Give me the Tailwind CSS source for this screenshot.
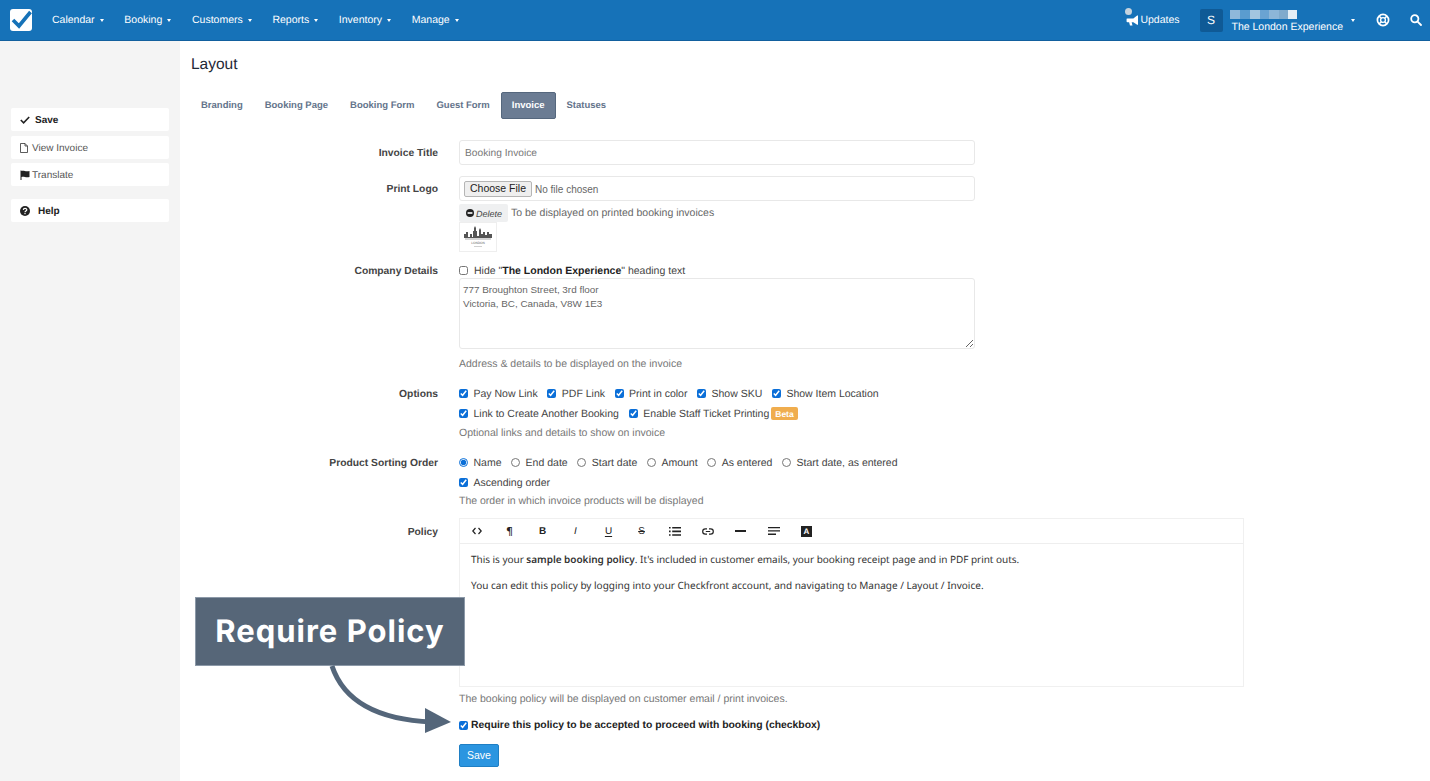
<!doctype html>
<html lang="en">
<head>
    <meta charset="UTF-8">
    <meta name="viewport" content="width=device-width, initial-scale=1.0">
    <title>Layout</title>
    <script src="https://cdn.jsdelivr.net/npm/@tailwindcss/browser@4"></script>
</head>
<body class="bg-white text-[#333] font-['Liberation_Sans',Arial,sans-serif] text-[10.5px] leading-[13px] [text-rendering:geometricPrecision] h-[781px] overflow-hidden relative">

    <!-- top nav -->
    <header class="h-[41px] bg-[#1672b8] border-b border-[#12609e] flex items-center text-white">
        <svg class="ml-[10px] w-[22px] h-[22px]" viewBox="0 0 22 22">
            <rect width="22" height="22" rx="3" fill="#fff"/>
            <path d="M3 11 L9 17 L20.5 3" fill="none" stroke="#1672b8" stroke-width="3.6"/>
        </svg>
        <nav class="ml-[20px] flex gap-[20.7px] [&>a]:flex [&>a]:items-center [&>a]:gap-[5px]">
            <a>Calendar <span class="border-x-[2.5px] border-x-transparent border-t-[3px] border-t-white"></span></a>
            <a>Booking <span class="border-x-[2.5px] border-x-transparent border-t-[3px] border-t-white"></span></a>
            <a>Customers <span class="border-x-[2.5px] border-x-transparent border-t-[3px] border-t-white"></span></a>
            <a>Reports <span class="border-x-[2.5px] border-x-transparent border-t-[3px] border-t-white"></span></a>
            <a>Inventory <span class="border-x-[2.5px] border-x-transparent border-t-[3px] border-t-white"></span></a>
            <a>Manage <span class="border-x-[2.5px] border-x-transparent border-t-[3px] border-t-white"></span></a>
        </nav>
        <div class="ml-auto flex items-center">
            <div class="relative flex items-center gap-[1px]">
                <span class="absolute left-[-1px] top-[-6px] w-[7px] h-[7px] rounded-full bg-[#c5d3de]"></span>
                <svg class="w-[13px] h-[11px]" viewBox="0 0 14 13" fill="#fff"><path d="M0 4.5 L1 4 L8 4 L12.5 0.5 L13.5 0.5 L13.5 11.5 L12.5 11.5 L8 8.5 L6 8.5 L7 12.5 L4 12.5 L3 8.5 L1 8.5 L0 8 Z"/></svg>
                <span>Updates</span>
            </div>
            <div class="ml-[20px] w-[23px] h-[23px] rounded-[2px] bg-[#0f5a96] flex items-center justify-center text-[12px]">S</div>
            <div class="ml-[9px] pt-[4px] flex flex-col">
                <div class="flex h-[9px] w-[67px] ml-[-2px]">
                    <i class="w-[10px] bg-[#8fb8da]"></i><i class="w-[10px] bg-[#5a9ccf]"></i><i class="w-[10px] bg-[#a3c5e0]"></i><i class="w-[9px] bg-[#6aa3d2]"></i><i class="w-[10px] bg-[#8db6d8]"></i><i class="w-[9px] bg-[#80aacc]"></i><i class="w-[9px] bg-[#e3edf5]"></i>
                </div>
                <div class="mt-[2px]">The London Experience</div>
            </div>
            <span class="ml-[8px] border-x-[2.5px] border-x-transparent border-t-[3px] border-t-white"></span>
            <svg class="ml-[21px] w-[14px] h-[14px]" viewBox="0 0 14 14" fill="none" stroke="#fff">
                <circle cx="7" cy="7" r="5.6" stroke-width="1.7"/><circle cx="7" cy="7" r="2.4" stroke-width="1.3"/>
                <path d="M3 3 L5.3 5.3 M11 3 L8.7 5.3 M3 11 L5.3 8.7 M11 11 L8.7 8.7" stroke-width="1.6"/>
            </svg>
            <svg class="ml-[20px] mr-[8px] w-[12px] h-[12px]" viewBox="0 0 12 12" fill="none" stroke="#fff" stroke-width="1.8">
                <circle cx="4.8" cy="4.8" r="3.6"/><path d="M7.6 7.6 L11 11" stroke-linecap="round"/>
            </svg>
        </div>
    </header>

    <div class="flex h-[740px]">
        <!-- left sidebar -->
        <aside class="w-[180px] shrink-0 bg-[#f4f4f4] px-[11px] pt-[67px]">
            <div class="h-[23px] bg-white rounded-[2px] flex items-center pl-[9px] gap-[5px] font-bold text-[#222] text-[10px]">
                <svg class="w-[10px] h-[8px]" viewBox="0 0 10 8" fill="none" stroke="#222" stroke-width="1.6"><path d="M0.8 4 L3.6 6.8 L9.2 1"/></svg>
                <span class="pt-[2px]">Save</span>
            </div>
            <div class="mt-[5px] h-[23px] bg-white rounded-[2px] flex items-center pl-[9px] gap-[4px] text-[#555] text-[10px]">
                <svg class="w-[8px] h-[10px]" viewBox="0 0 8 10" fill="none" stroke="#333" stroke-width="0.8"><path d="M0.5 0.5 H5 L7.5 3 V9.5 H0.5 Z M5 0.5 V3 H7.5"/></svg>
                <span class="pt-[1px]">View Invoice</span>
            </div>
            <div class="mt-[4px] h-[23px] bg-white rounded-[2px] flex items-center pl-[9px] gap-[2px] text-[#555] text-[10px]">
                <svg class="w-[10px] h-[10px]" viewBox="0 0 10 10" fill="#222"><path d="M0.5 0.5 H1.5 V10 H0.5 Z M1.5 1 C4 0 5.5 2.2 9.5 1 V7 C5.5 8 4 6 1.5 7 Z"/></svg>
                <span class="pt-[1px]">Translate</span>
            </div>
            <div class="mt-[13px] h-[23px] bg-white rounded-[2px] flex items-center pl-[9px] gap-[8px] font-bold text-[#222] text-[10px]">
                <svg class="w-[10px] h-[10px]" viewBox="0 0 10 10"><circle cx="5" cy="5" r="5" fill="#222"/><path d="M3.3 3.9 C3.4 1.9 6.8 1.9 6.8 3.8 C6.8 5 5 5 5 6.2" fill="none" stroke="#fff" stroke-width="1.2"/><rect x="4.4" y="7" width="1.2" height="1.2" fill="#fff"/></svg>
                <span class="pt-[2px]">Help</span>
            </div>
        </aside>

        <!-- main -->
        <main class="flex-1 pl-[11px]">
            <h1 class="mt-[15px] text-[15.5px] leading-[18px] text-[#1f2937]">Layout</h1>

            <div class="mt-[18px] ml-[-1px] flex items-center text-[9.5px] font-bold text-[#64748b] h-[27px] [&>a]:px-[11px] [&>a]:pb-[1px] [&>a]:h-[27px] [&>a]:flex [&>a]:items-center [&>a]:rounded-[2px]">
                <a>Branding</a>
                <a>Booking Page</a>
                <a>Booking Form</a>
                <a>Guest Form</a>
                <a class="bg-[#6b7c93] text-white border border-[#55677d] !px-[10px]">Invoice</a>
                <a>Statuses</a>
            </div>

            <!-- invoice title -->
            <div class="mt-[21px] flex h-[25px]">
                <label class="w-[247px] text-right font-bold text-[#444] text-[10.3px] leading-[27px]">Invoice Title</label>
                <div class="ml-[21px] w-[516px] h-[25px] border border-[#e8e8e8] rounded-[3px] px-[5px] text-[#777] text-[10.2px] leading-[25px]">Booking Invoice</div>
            </div>

            <!-- print logo -->
            <div class="mt-[11px] flex">
                <label class="w-[247px] text-right font-bold text-[#444] text-[10.3px] leading-[27px]">Print Logo</label>
                <div class="ml-[21px] w-[516px]">
                    <div class="h-[25px] border border-[#e8e8e8] rounded-[3px] flex items-center px-[4px]">
                        <input type="file" class="text-[10px] text-[#666] file:h-[16px] file:px-[5px] file:mr-[3px] file:bg-[#efefef] file:border file:border-[#b5b5b5] file:rounded-[2px] file:text-[#222] file:text-[10.5px]">
                    </div>
                    <div class="mt-[3px] flex h-[18px]">
                        <span class="w-[49px] h-[18px] bg-[#eff0f1] rounded-[2px] flex items-center pl-[7px] gap-[2px] text-[9px] italic text-[#444]">
                            <svg class="w-[8px] h-[8px] shrink-0" viewBox="0 0 8 8"><circle cx="4" cy="4" r="4" fill="#222"/><rect x="1.6" y="3.2" width="4.8" height="1.6" fill="#fff"/></svg>
                            <span class="pt-[2px]">Delete</span>
                        </span>
                        <span class="ml-[3px] text-[#666] leading-[19px]">To be displayed on printed booking invoices</span>
                    </div>
                    <div class="w-[38px] h-[30px] border border-[#eee] flex items-center justify-center">
                        <svg class="w-[30px] h-[24px]" viewBox="0 0 30 24">
                            <path d="M1 12 V9 H3 V7 H5 V12 H7 V9 H9 V12 H10 V6 H11 V3 L12 1 L13 3 V6 H14 V11 H16 V5 L17 3 L18 5 V9 H20 V7 H22 V10 H24 V7 H26 V9 H29 V13 H1 Z" fill="#555"/>
                            <path d="M2 14 H28" stroke="#888" stroke-width="0.7"/>
                            <text x="15" y="19" font-size="3.2" text-anchor="middle" fill="#666">LONDON</text>
                            <path d="M11 21.5 H19" stroke="#bbb" stroke-width="0.7"/>
                        </svg>
                    </div>
                </div>
            </div>

            <!-- company details -->
            <div class="mt-[11px] flex">
                <label class="w-[247px] text-right font-bold text-[#444] text-[10.3px] leading-[17px]">Company Details</label>
                <div class="ml-[21px] w-[516px]">
                    <label class="flex items-start h-[15px] text-[#444]">
                        <input type="checkbox" class="w-[9px] h-[9px] mr-[6px] mt-[3px]">
                        <span class="leading-[17px]">Hide "<b class="text-[#222]">The London Experience</b>" heading text</span>
                    </label>
                    <textarea class="block w-[516px] h-[71px] border border-[#e8e8e8] rounded-[3px] px-[3px] py-[4px] text-[9.9px] leading-[14px] text-[#666]">777 Broughton Street, 3rd floor
Victoria, BC, Canada, V8W 1E3</textarea>
                    <p class="mt-[8px] text-[#777] leading-[14px]">Address &amp; details to be displayed on the invoice</p>
                </div>
            </div>

            <!-- options -->
            <div class="mt-[12px] flex">
                <label class="w-[247px] text-right font-bold text-[#444] text-[10.3px] leading-[24px]">Options</label>
                <div class="ml-[21px] w-[516px] text-[#444] [&_input]:w-[9px] [&_input]:h-[9px] [&_input]:mt-[5.5px] [&_input]:mr-[5.5px] [&_input]:accent-[#0b6fd8] [&_label]:flex [&_label]:items-start [&_label]:leading-[22px]">
                    <div class="flex h-[20px] gap-[9.6px]">
                        <label><input type="checkbox" checked>Pay Now Link</label>
                        <label><input type="checkbox" checked>PDF Link</label>
                        <label><input type="checkbox" checked>Print in color</label>
                        <label><input type="checkbox" checked>Show SKU</label>
                        <label><input type="checkbox" checked>Show Item Location</label>
                    </div>
                    <div class="flex h-[20px] gap-[10px]">
                        <label><input type="checkbox" checked>Link to Create Another Booking</label>
                        <label><input type="checkbox" checked>Enable Staff Ticket Printing<span class="ml-[2px] mt-[4px] px-[4px] h-[13px] rounded-[2px] bg-[#f0ad4e] text-white text-[8.5px] font-bold flex items-center">Beta</span></label>
                    </div>
                    <p class="text-[#777] leading-[20px]">Optional links and details to show on invoice</p>
                </div>
            </div>

            <!-- sorting -->
            <div class="mt-[9px] flex">
                <label class="w-[247px] text-right font-bold text-[#444] text-[10.3px] leading-[24px]">Product Sorting Order</label>
                <div class="ml-[21px] w-[516px] text-[#444] [&_input]:w-[9px] [&_input]:h-[9px] [&_input]:mt-[5.5px] [&_input]:mr-[5.5px] [&_input]:accent-[#0b6fd8] [&_label]:flex [&_label]:items-start [&_label]:leading-[22px]">
                    <div class="flex h-[20px] gap-[9.6px]">
                        <label><input type="radio" name="sort" checked>Name</label>
                        <label><input type="radio" name="sort">End date</label>
                        <label><input type="radio" name="sort">Start date</label>
                        <label><input type="radio" name="sort">Amount</label>
                        <label><input type="radio" name="sort">As entered</label>
                        <label><input type="radio" name="sort">Start date, as entered</label>
                    </div>
                    <div class="flex h-[20px]">
                        <label><input type="checkbox" checked>Ascending order</label>
                    </div>
                    <p class="text-[#777] leading-[18px]">The order in which invoice products will be displayed</p>
                </div>
            </div>

            <!-- policy -->
            <div class="mt-[8px] flex">
                <label class="w-[247px] text-right font-bold text-[#444] text-[10.3px] leading-[30px]">Policy</label>
                <div class="ml-[21px] w-[785px]">
                    <div class="border border-[#f0f0f0] h-[169px]">
                        <div class="h-[25px] border-b border-[#eee] flex items-center text-[#222] text-[10px] [&>span]:w-[33px] [&>span]:h-[25px] [&>span]:flex [&>span]:items-center [&>span]:justify-center">
                            <span><svg class="w-[10px] h-[8px]" viewBox="0 0 10 8" fill="none" stroke="#222" stroke-width="1.2"><path d="M3.5 1 L0.8 4 L3.5 7 M6.5 1 L9.2 4 L6.5 7"/></svg></span>
                            <span class="font-['DejaVu_Sans',sans-serif] text-[11px]">¶</span>
                            <span class="font-bold">B</span>
                            <span class="italic">I</span>
                            <span class="underline underline-offset-2">U</span>
                            <span class="line-through">S</span>
                            <span><svg class="w-[12px] h-[9px]" viewBox="0 0 12 9" fill="#222"><path d="M0 0 H1.6 V1.6 H0 Z M0 3.6 H1.6 V5.2 H0 Z M0 7.2 H1.6 V8.8 H0 Z M3.2 0 H12 V1.6 H3.2 Z M3.2 3.6 H12 V5.2 H3.2 Z M3.2 7.2 H12 V8.8 H3.2 Z"/></svg></span>
                            <span><svg class="w-[12px] h-[7px]" viewBox="0 0 12 7" fill="none" stroke="#222" stroke-width="1.2"><path d="M5 0.8 H3.4 A2.7 2.7 0 0 0 3.4 6.2 H5 M7 0.8 H8.6 A2.7 2.7 0 0 1 8.6 6.2 H7 M3.8 3.5 H8.2"/></svg></span>
                            <span><i class="block w-[11px] h-[2px] bg-[#222]"></i></span>
                            <span><svg class="w-[12px] h-[8px]" viewBox="0 0 12 8" fill="#222"><path d="M0 0 H12 V1.3 H0 Z M0 3.3 H12 V4.6 H0 Z M0 6.6 H8 V7.9 H0 Z"/></svg></span>
                            <span><i class="block w-[11px] h-[11px] bg-[#222] text-white text-[8px] font-bold not-italic leading-[11px] text-center">A</i></span>
                        </div>
                        <div class="px-[11px] pt-[9px] font-['Noto_Sans',sans-serif] text-[10px] leading-[13px] text-[#333]">
                            <p class="tracking-[-0.03px]">This is your <b class="font-semibold">sample booking policy</b>. It's included in customer emails, your booking receipt page and in PDF print outs.</p>
                            <p class="mt-[13px]">You can edit this policy by logging into your Checkfront account, and navigating to Manage / Layout / Invoice.</p>
                        </div>
                    </div>
                    <p class="mt-[5px] text-[#777] leading-[14px]">The booking policy will be displayed on customer email / print invoices.</p>
                    <label class="mt-[12px] flex items-center h-[14px] font-bold text-[#222] text-[10.4px]">
                        <input type="checkbox" checked class="w-[9px] h-[9px] mr-[3px] accent-[#0b6fd8]">
                        <span>Require this policy to be accepted to proceed with booking (checkbox)</span>
                    </label>
                    <button class="mt-[12px] block w-[40px] h-[23px] bg-[#2b95e0] border border-[#1f7fc4] rounded-[2px] text-white">Save</button>
                </div>
            </div>
        </main>
    </div>

    <!-- callout over the form -->
    <div class="absolute left-[195px] top-[597px] w-[270px] h-[69px] bg-[#566678] border border-[#8c99a8] flex items-center justify-center text-white text-[31px] tracking-[1px] font-bold font-['Inter',sans-serif]">Require Policy</div>
    <svg class="absolute left-0 top-0 pointer-events-none" width="1430" height="781" viewBox="0 0 1430 781">
        <path d="M332 666 C345 705 385 720 432 722" fill="none" stroke="#54667a" stroke-width="5"/>
        <path d="M425 708 L451 722 L425 733 Z" fill="#54667a"/>
    </svg>

</body>
</html>
